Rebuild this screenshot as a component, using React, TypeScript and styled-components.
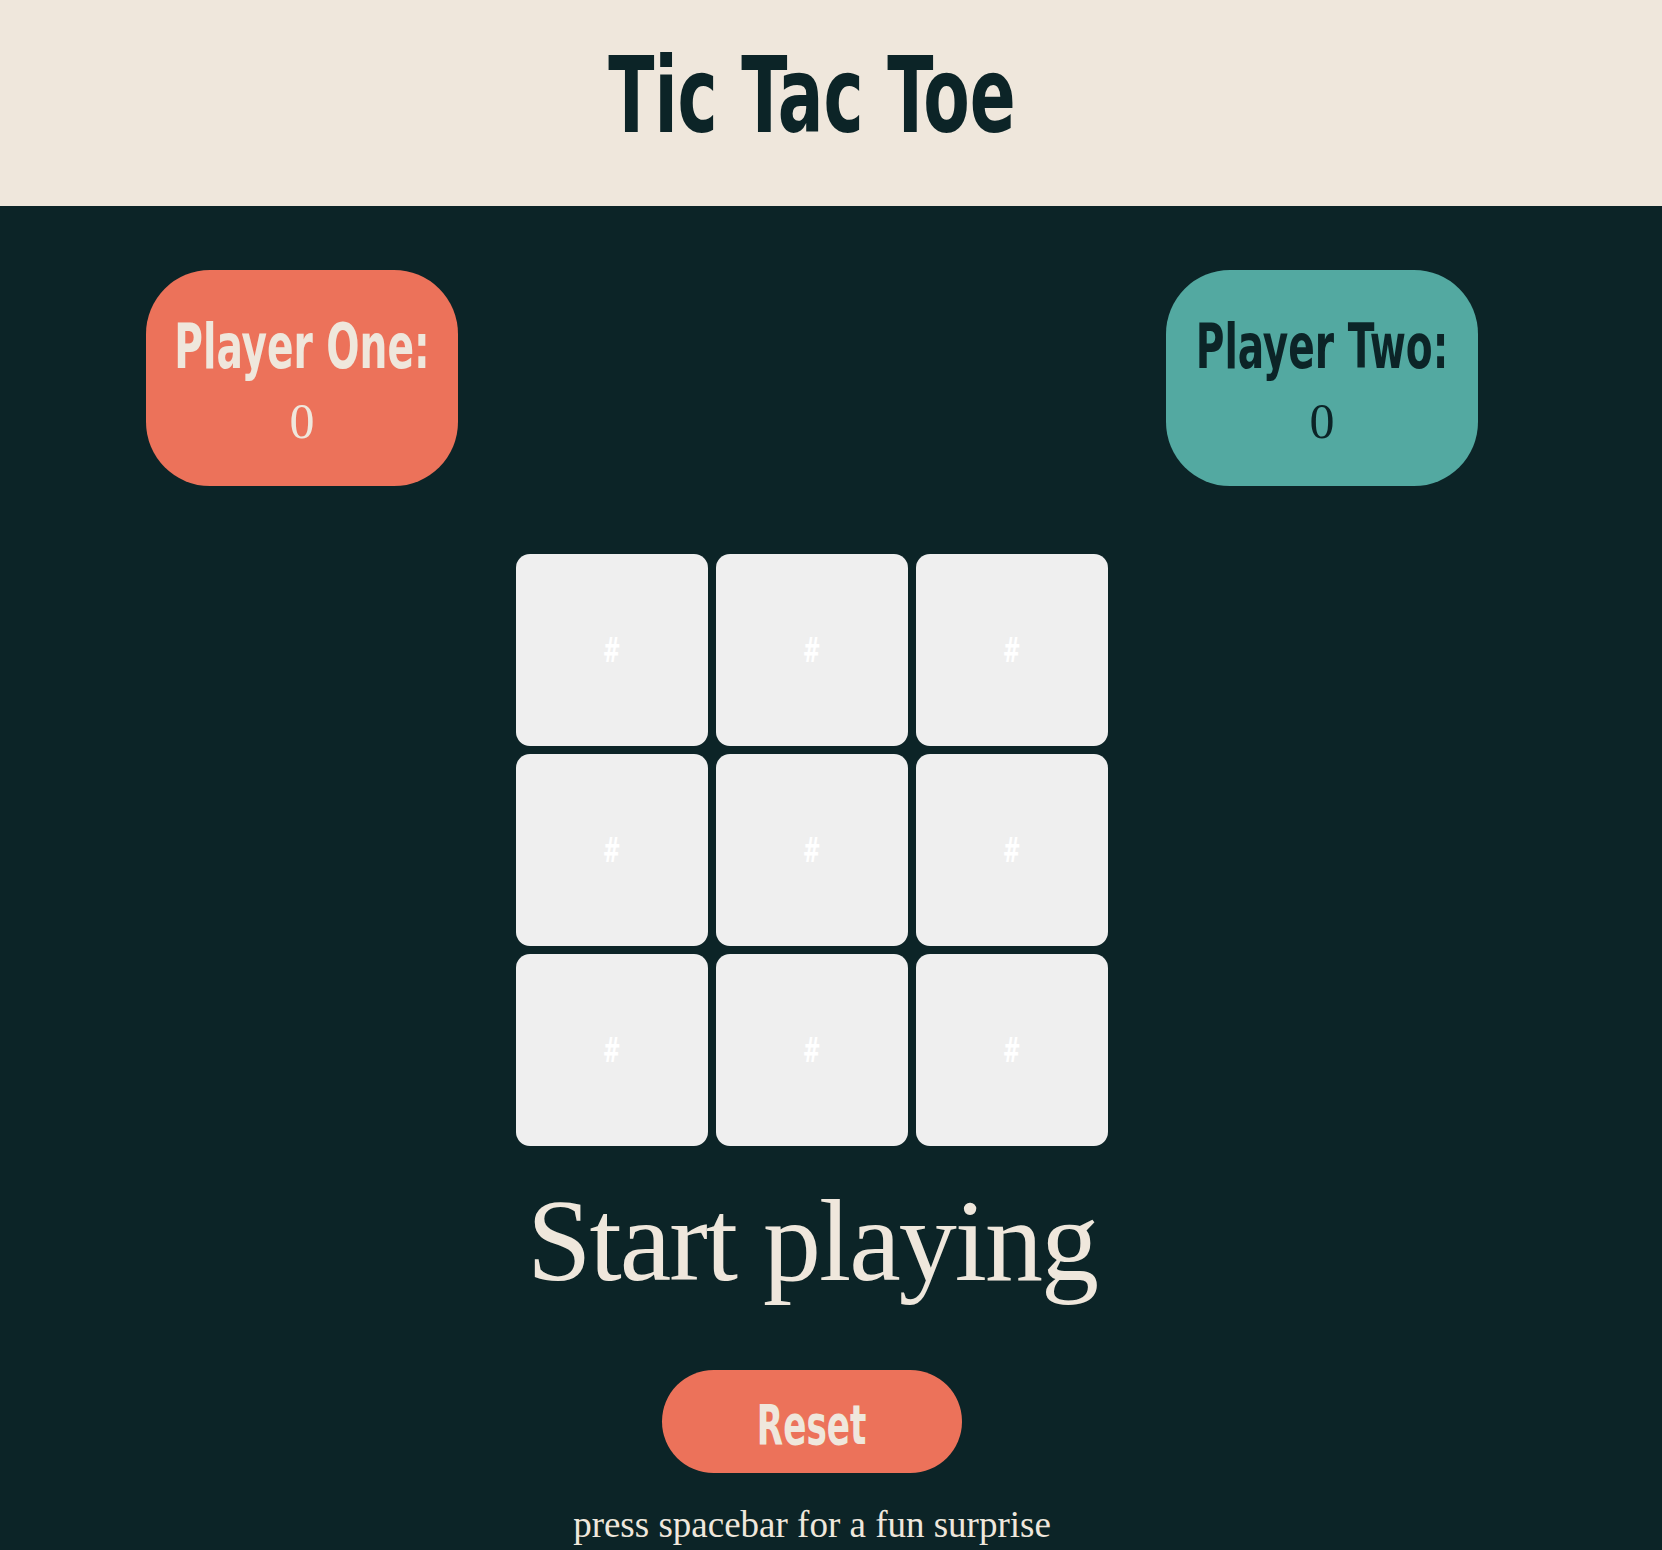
import React from "react";
import styled, { createGlobalStyle } from "styled-components";

const GlobalStyle = createGlobalStyle`
  html, body {
    margin: 0;
    padding: 0;
    background: #0c2427;
  }
  body {
    font-family: "Liberation Serif", "DejaVu Serif", serif;
  }
`;

const condensed = `"DejaVu Sans Condensed", "DejaVu Sans", sans-serif`;

const Squeeze = styled.span<{ $k: number }>`
  display: inline-block;
  white-space: nowrap;
  transform: scaleX(${(p) => p.$k});
  transform-origin: center;
`;

const Header = styled.header`
  height: 206px;
  background: #efe7dc;
`;

const HeaderInner = styled.div`
  width: 1624px;
  height: 100%;
  box-sizing: border-box;
  padding-top: 43px;
  display: flex;
  justify-content: center;
  align-items: flex-start;
`;

const Title = styled.h1`
  margin: 0;
  font-family: ${condensed};
  font-weight: 700;
  font-size: 106px;
  line-height: 1;
  color: #0c2427;
`;

const Main = styled.main`
  width: 1624px;
  display: flex;
  flex-direction: column;
  align-items: center;
  padding-top: 64px;
`;

const ScoreRow = styled.div`
  align-self: stretch;
  display: flex;
  justify-content: space-between;
  padding: 0 146px;
`;

const ScoreCard = styled.div<{ $bg: string; $fg: string }>`
  width: 312px;
  height: 216px;
  box-sizing: border-box;
  padding-top: 45px;
  border-radius: 64px;
  background: ${(p) => p.$bg};
  color: ${(p) => p.$fg};
  display: flex;
  flex-direction: column;
  align-items: center;
  gap: 18px;
`;

const ScoreLabel = styled.div`
  font-family: ${condensed};
  font-weight: 700;
  font-size: 63px;
  line-height: 1;
`;

const ScoreValue = styled.div`
  font-family: "Liberation Serif", serif;
  font-size: 50px;
  line-height: 1;
`;

const Board = styled.div`
  margin-top: 68px;
  display: grid;
  grid-template-columns: repeat(3, 192px);
  grid-auto-rows: 192px;
  gap: 8px;
`;

const Cell = styled.div`
  background: #efefef;
  border-radius: 14px;
  display: flex;
  align-items: center;
  justify-content: center;
  color: #ffffff;
  font-family: ${condensed};
  font-weight: 700;
  font-size: 34px;
  line-height: 1;
`;

const Status = styled.h2`
  margin: 26px 0 0;
  font-family: "Liberation Serif", serif;
  font-weight: 400;
  font-size: 116px;
  line-height: 1.2;
  letter-spacing: -2px;
  color: #efe7dc;
`;

const ResetButton = styled.button`
  margin-top: 59px;
  width: 300px;
  height: 103px;
  box-sizing: border-box;
  padding: 6px 0 0;
  border: none;
  border-radius: 52px;
  background: #ec725a;
  color: #efe7dc;
  font-family: ${condensed};
  font-weight: 700;
  font-size: 56px;
  line-height: 1;
  cursor: pointer;
`;

const Hint = styled.p`
  margin: 30px 0 0;
  font-family: "Liberation Serif", serif;
  font-size: 37px;
  line-height: 1.2;
  color: #efe7dc;
`;

export default function App() {
  const cells = Array.from({ length: 9 });
  return (
    <>
      <GlobalStyle />
      <Header>
        <HeaderInner>
          <Title>
            <Squeeze $k={0.71}>Tic Tac Toe</Squeeze>
          </Title>
        </HeaderInner>
      </Header>
      <Main>
        <ScoreRow>
          <ScoreCard $bg="#ec725a" $fg="#efe7dc">
            <ScoreLabel>
              <Squeeze $k={0.69}>Player One:</Squeeze>
            </ScoreLabel>
            <ScoreValue>0</ScoreValue>
          </ScoreCard>
          <ScoreCard $bg="#53a9a1" $fg="#0c2427">
            <ScoreLabel>
              <Squeeze $k={0.69}>Player Two:</Squeeze>
            </ScoreLabel>
            <ScoreValue>0</ScoreValue>
          </ScoreCard>
        </ScoreRow>
        <Board>
          {cells.map((_, i) => (
            <Cell key={i}>
              <Squeeze $k={0.7}>#</Squeeze>
            </Cell>
          ))}
        </Board>
        <Status>Start playing</Status>
        <ResetButton>
          <Squeeze $k={0.68}>Reset</Squeeze>
        </ResetButton>
        <Hint>press spacebar for a fun surprise</Hint>
      </Main>
    </>
  );
}
